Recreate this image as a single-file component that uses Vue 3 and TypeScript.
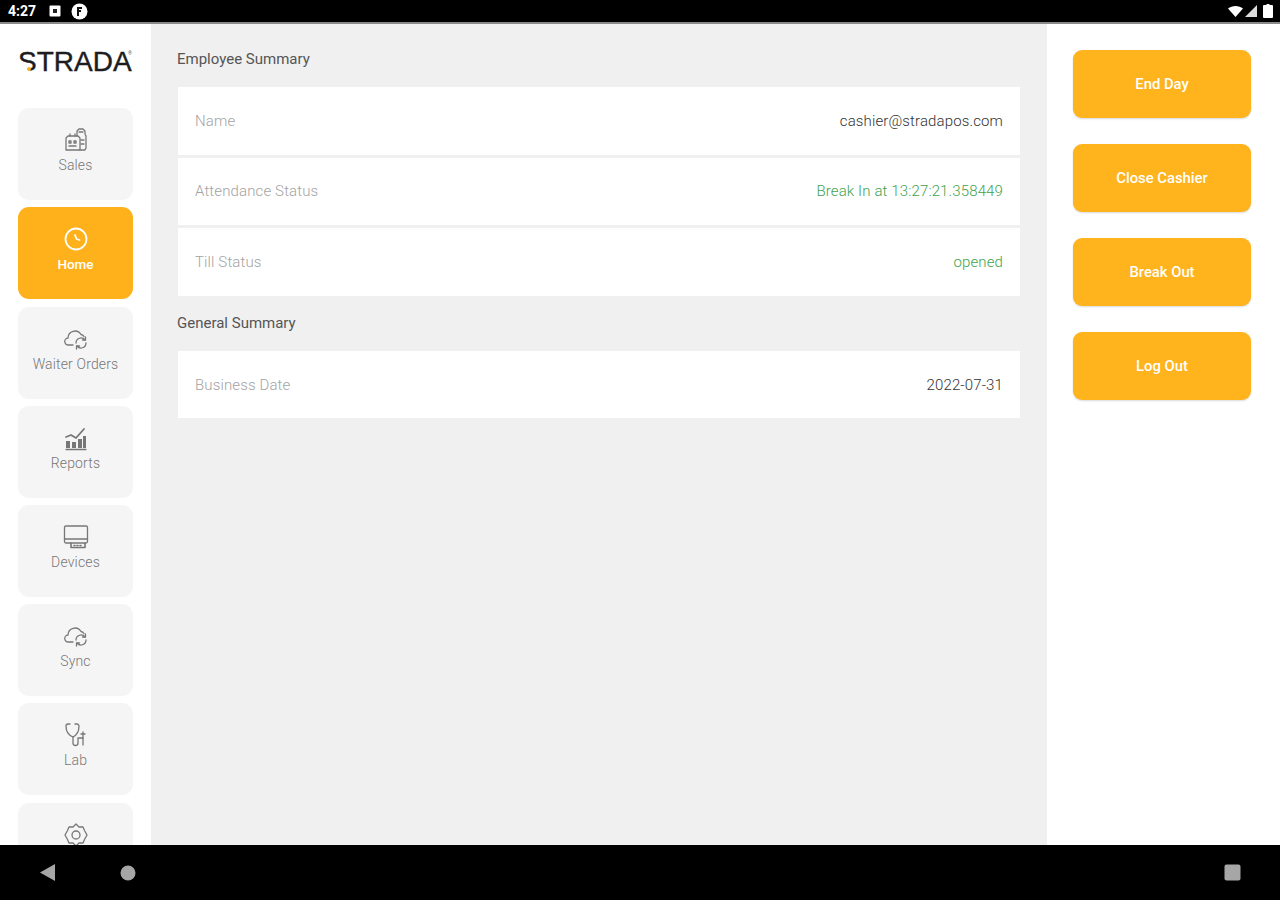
<script setup lang="ts">
interface NavItem { label?: string; icon: string; active?: boolean }
const nav: NavItem[] = [
  { label: 'Sales', icon: 'sales' },
  { label: 'Home', icon: 'home', active: true },
  { label: 'Waiter Orders', icon: 'cloud' },
  { label: 'Reports', icon: 'reports' },
  { label: 'Devices', icon: 'devices' },
  { label: 'Sync', icon: 'cloud' },
  { label: 'Lab', icon: 'lab' },
  { icon: 'settings' },
]
const employee = [
  { k: 'Name', v: 'cashier@stradapos.com', cls: 'dark' },
  { k: 'Attendance Status', v: 'Break In at 13:27:21.358449', cls: 'green' },
  { k: 'Till Status', v: 'opened', cls: 'green' },
]
const actions = ['End Day', 'Close Cashier', 'Break Out', 'Log Out']
</script>

<template>
  <div class="screen">
    <header class="status">
      <span class="time">4:27</span>
      <svg width="12" height="12" viewBox="0 0 12 12"><rect x="0.500" y="0.500" width="11" height="11" rx="1" fill="#fff"/><rect x="4" y="4" width="4" height="4" fill="#222"/></svg>
      <svg class="st-b" width="17" height="17" viewBox="0 0 17 17"><circle cx="8.500" cy="8.500" r="8" fill="#fff"/><path d="M7 13V5h4M7 8h3" stroke="#111" stroke-width="2" fill="none"/></svg>
      <span class="grow"></span>
      <svg width="15" height="12" viewBox="0 0 15 12"><path d="M0 3.500C4 0 11 0 15 3.500L7.500 12z" fill="#fff"/></svg>
      <svg class="st-c" width="12" height="12" viewBox="0 0 12 12"><path d="M12 0v12H0z" fill="#ddd"/></svg>
      <svg class="st-d" width="10" height="14" viewBox="0 0 10 14"><path d="M3.500 0h3v1H9a1 1 0 0 1 1 1v11a1 1 0 0 1-1 1H1a1 1 0 0 1-1-1V2a1 1 0 0 1 1-1h2.500z" fill="#fff"/></svg>
    </header>

    <div class="body">
      <aside class="side">
        <div class="logo">
          <span class="logo-text">STRADA</span>
          <span class="reg">®</span>
          <span class="logo-cut"></span>
          <span class="logo-dot"></span>
        </div>
        <nav class="nav">
          <div v-for="item in nav" :key="item.icon + item.label" class="nav-item" :class="{ active: item.active }">
            <svg class="ico" width="26" height="26" viewBox="0 0 26 26" fill="none" stroke="currentColor" stroke-width="1.300" stroke-linejoin="round" stroke-linecap="round">
              <template v-if="item.icon === 'sales'">
                <path d="M3 11l2-2h10l2 2v12H3z"/>
                <path d="M14 9V4l2-2h4l2 2v3l1 2v12l-1 2h-5"/>
                <path d="M16 5h4M7 9V7M12 9V7M6 14h2v2H6zM11 14h2v2h-2zM6 19h7M18 13h3M18 17h3"/>
              </template>
              <template v-else-if="item.icon === 'home'">
                <circle cx="13" cy="13" r="10.500" stroke-width="1.800"/>
                <path d="M12 9l1.500 4 3 1" stroke-width="1.800"/>
              </template>
              <template v-else-if="item.icon === 'cloud'">
                <path d="M10 19H5.500a3.500 3.500 0 0 1-.5-7A7 7 0 0 1 18 8.500a4 4 0 0 1 3 2"/>
                <path d="M23 17a5 5 0 0 1-9 3M13 17a5 5 0 0 1 9-3"/>
                <path d="M22.500 11v3h-3M13.500 23v-3h3"/>
              </template>
              <template v-else-if="item.icon === 'reports'">
                <path d="M3 12l5-2 5 3 8-9" stroke-width="1.800"/>
                <path d="M3 16h4v7H3zM9 17h4v6H9zM15 14h4v9h-4zM20 11h3v12h-3z" fill="currentColor" stroke="none"/>
                <path d="M3 24.500h20"/>
              </template>
              <template v-else-if="item.icon === 'devices'">
                <rect x="1.500" y="2" width="23" height="17" rx="1.500"/>
                <path d="M1.500 15h23"/>
                <path d="M8 19v4.500h14V19M11 21.500h1M14 21.500h1M17 21.500h1" stroke-width="1.600"/>
              </template>
              <template v-else-if="item.icon === 'lab'">
                <path d="M7 2H5a2 2 0 0 0-2 2c0 5 2 9 7 11 4-2 6-6 6-11a2 2 0 0 0-2-2h-2"/>
                <path d="M10 15v6a2.500 2.500 0 0 0 5 0v-5h5v7"/>
                <path d="M20 10v6M18 12h4"/>
              </template>
              <template v-else>
                <path d="M13 2l3 3h4l1.500 3.500L24 13l-2.500 4.500L20 21h-4l-3 3-3-3H6l-1.500-3.500L2 13l2.500-4.500L6 5h4z"/>
                <circle cx="13" cy="13" r="4"/>
              </template>
            </svg>
            <span v-if="item.label" class="nav-label">{{ item.label }}</span>
          </div>
        </nav>
      </aside>

      <main class="main">
        <h2 class="title">Employee Summary</h2>
        <div class="rows">
          <div v-for="r in employee" :key="r.k" class="row">
            <span class="key">{{ r.k }}</span>
            <span class="val" :class="r.cls">{{ r.v }}</span>
          </div>
        </div>
        <h2 class="title second">General Summary</h2>
        <div class="row date">
          <span class="key">Business Date</span>
          <span class="val dark">2022-07-31</span>
        </div>
      </main>

      <aside class="actions">
        <button v-for="a in actions" :key="a" class="btn">{{ a }}</button>
      </aside>
    </div>

    <footer class="navbar">
      <svg width="16" height="17" viewBox="0 0 16 17"><path d="M15 0v17L0 8.500z" fill="#a6a6a6"/></svg>
      <svg class="circle" width="16" height="16" viewBox="0 0 16 16"><circle cx="8" cy="8" r="7.500" fill="#a6a6a6"/></svg>
      <span class="grow"></span>
      <svg width="17" height="17" viewBox="0 0 17 17"><rect x="0.500" y="0.500" width="16" height="16" rx="2" fill="#a6a6a6"/></svg>
    </footer>
  </div>
</template>

<style>
html, body { margin: 0; background: #fff; }
</style>

<style scoped>
.screen {
  width: 1280px;
  height: 900px;
  display: flex;
  flex-direction: column;
  overflow: hidden;
  font-family: Roboto, "Liberation Sans", sans-serif;
  background: #fff;
}
.status {
  height: 22px;
  flex: none;
  background: #000;
  border-bottom: 2px solid #8a8a8a;
  display: flex;
  align-items: center;
  padding: 0 7px 0 8px;
  color: #fff;
}
.time { font-size: 14px; font-weight: 700; width: 41px; }
.st-b { margin-left: 10px; }
.st-c { margin-left: 2px; }
.st-d { margin-left: 6px; }
.grow { flex: 1; }
.body {
  flex: 1;
  min-height: 0;
  display: flex;
}
.side {
  width: 151px;
  flex: none;
  overflow: hidden;
  box-sizing: border-box;
  padding: 0 18px;
}
.logo {
  position: relative;
  height: 84.300px;
  padding-top: 22px;
  box-sizing: border-box;
}
.logo-text {
  display: block;
  font-family: "Liberation Sans", sans-serif;
  font-size: 28px;
  line-height: 32px;
  color: #1d1d1f;
  -webkit-text-stroke: 0.400px #1d1d1f;
}
.reg {
  position: absolute;
  left: 110px;
  top: 26px;
  font-size: 5px;
  line-height: 6px;
  color: #666;
}
.logo-cut {
  position: absolute;
  left: 0;
  top: 39px;
  width: 12px;
  height: 10px;
  background: #fff;
}
.logo-dot {
  position: absolute;
  left: 9px;
  top: 43px;
  width: 4px;
  height: 4px;
  border-radius: 50%;
  background: #f9b21b;
}
.nav {
  display: flex;
  flex-direction: column;
  gap: 7.200px;
}
.nav-item {
  height: 92px;
  width: 115px;
  flex: none;
  border-radius: 11px;
  background: #f5f5f5;
  color: #777;
  display: flex;
  flex-direction: column;
  align-items: center;
  padding-top: 19px;
  box-sizing: border-box;
}
.nav-item.active {
  background: #ffb11b;
  color: #fff;
}
.nav-label {
  font-size: 14px;
  line-height: 16px;
  font-weight: 300;
  letter-spacing: 0.150px;
  margin-top: 4px;
  white-space: nowrap;
}
.active .nav-label { font-size: 13.500px; font-weight: 500; letter-spacing: 0; }
.ico { width: 26px; height: 26px; flex: none; }
.main {
  flex: 1;
  background: #f0f0f0;
  padding: 0 27px;
}
.title {
  margin: 0 0 0 -1px;
  padding-top: 26px;
  font-size: 15px;
  line-height: 18px;
  font-weight: 400;
  color: #555;
  height: 63px;
  box-sizing: border-box;
}
.title.second {
  height: 55px;
  padding-top: 18px;
}
.rows {
  display: flex;
  flex-direction: column;
  gap: 3px;
}
.row {
  height: 67.500px;
  background: #fff;
  box-sizing: border-box;
  padding: 0 17px;
  display: flex;
  justify-content: space-between;
  align-items: center;
  font-size: 15px;
  letter-spacing: 0.130px;
  font-weight: 300;
}
.row.date { padding-top: 2px; }
.key { color: #a3a3a3; }
.val.dark { color: #333; }
.val.green { color: #3fa34d; }
.actions {
  width: 233px;
  flex: none;
  box-sizing: border-box;
  padding: 26px 29px 0 26px;
  display: flex;
  flex-direction: column;
  gap: 26px;
}
.btn {
  height: 68px;
  flex: none;
  border: none;
  border-radius: 9px;
  background: #ffb31c;
  color: #fff;
  font-family: inherit;
  font-size: 14.800px;
  font-weight: 500;
  box-shadow: 0 1px 2px rgba(0, 0, 0, 0.15);
  padding: 0;
}
.navbar {
  height: 55px;
  flex: none;
  background: #000;
  display: flex;
  align-items: center;
  padding: 0 39px 0 40px;
}
.circle { margin-left: 64px; }
</style>
